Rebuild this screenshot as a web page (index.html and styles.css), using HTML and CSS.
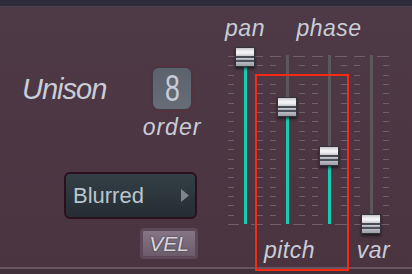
FILE: index.html
```html
<!DOCTYPE html>
<html>
<head>
    <title>Unison</title>
    <link rel="stylesheet" href="styles.css">
</head>
<body>
<div class="topbar"></div>

<div class="panel">
    <div class="left">
        <div class="unison-row">
            <div class="unison">Unison</div>
            <div class="order">
                <div class="order-box"><span class="digit">8</span></div>
                <div class="order-label">order</div>
            </div>
        </div>
        <div class="dropdown">
            <span class="dropdown-text">Blurred</span>
            <svg class="dropdown-arrow" width="8" height="13" viewBox="0 0 8 13">
                <polygon points="0,0 8,6.5 0,13" fill="#7c868c"/>
            </svg>
        </div>
        <div class="vel">VEL</div>
    </div>

    <div class="sliders">
        <div class="slider">
            <div class="label-top"><span>pan</span></div>
            <div class="rail" style="--v: 2px">
                <div class="track"></div>
                <div class="knob"></div>
            </div>
            <div class="label-bottom"></div>
        </div>
        <div class="slider">
            <div class="label-top"></div>
            <div class="rail" style="--v: 52px">
                <div class="track"></div>
                <div class="knob"></div>
            </div>
            <div class="label-bottom"><span>pitch</span></div>
        </div>
        <div class="slider">
            <div class="label-top"><span>phase</span></div>
            <div class="rail" style="--v: 101px">
                <div class="track"></div>
                <div class="knob"></div>
            </div>
            <div class="label-bottom"></div>
        </div>
        <div class="slider">
            <div class="label-top"></div>
            <div class="rail" style="--v: 169px">
                <div class="track"></div>
                <div class="knob"></div>
            </div>
            <div class="label-bottom"><span>var</span></div>
        </div>
    </div>
</div>

<div class="footer"></div>

<div class="highlight"></div>
</body>
</html>
```

FILE: styles.css
```css
* {
    margin: 0;
    padding: 0;
    box-sizing: border-box;
}

body {
    position: relative;
    width: 412px;
    height: 274px;
    overflow: hidden;
    font-family: 'Liberation Sans', Arial, sans-serif;
    background: #4b3541;
    color: #c9cdd8;
}

.topbar {
    height: 7px;
    background: #2d2c3a;
    border-bottom: 1px solid #4a4254;
}

.panel {
    display: flex;
    height: 260px;
    background: linear-gradient(to bottom, #4e3946, #4a3440);
}

.footer {
    height: 7px;
    background: #42303b;
    border-top: 2px solid #6a5462;
}

/* left side */

.left {
    width: 224px;
    display: flex;
    flex-direction: column;
}

.unison-row {
    display: grid;
    grid-template-columns: 130px 40px;
    margin-top: 60px;
    padding-left: 22px;
    height: 72px;
}

.unison {
    font-style: italic;
    font-size: 29px;
    line-height: 34px;
    letter-spacing: -1px;
    margin-top: 5px;
}

.order {
    display: flex;
    flex-direction: column;
    align-items: center;
}

.order-box {
    width: 40px;
    height: 43px;
    border: 1px solid #3a3c48;
    border-radius: 7px;
    background: linear-gradient(to bottom, #5b626c, #666d77);
    box-shadow: 0 0 0 2px #56323f;
    display: flex;
    justify-content: center;
    align-items: center;
}

.digit {
    display: inline-block;
    font-size: 37px;
    line-height: 37px;
    color: #c8ccd6;
    transform: scaleX(0.72);
}

.order-label {
    margin-top: 5px;
    font-style: italic;
    font-size: 23px;
    line-height: 24px;
    letter-spacing: 1px;
    white-space: nowrap;
}

.dropdown {
    margin-top: 33px;
    margin-left: 64px;
    width: 133px;
    height: 47px;
    border: 2px solid #2c0f1c;
    border-radius: 6px;
    background: linear-gradient(to bottom, #343f46, #252d33);
    display: flex;
    align-items: center;
    justify-content: space-between;
    padding: 0 6px 0 7px;
}

.dropdown-text {
    font-size: 22px;
    color: #b9c6cf;
}

.vel {
    margin-top: 9px;
    margin-left: 140px;
    width: 58px;
    height: 31px;
    border: 3px solid #5d4957;
    border-radius: 4px;
    background: linear-gradient(to bottom, #857585, #6c5c6b);
    color: #d6d6de;
    font-style: italic;
    font-size: 21px;
    line-height: 25px;
    text-align: center;
    text-shadow: 0 0 2px #3a2a36;
}

/* sliders */

.sliders {
    display: flex;
}

.slider {
    width: 42px;
    display: flex;
    flex-direction: column;
}

.label-top,
.label-bottom {
    display: flex;
    justify-content: center;
    font-style: italic;
    font-size: 23px;
    line-height: 24px;
    letter-spacing: 0.5px;
    white-space: nowrap;
}

.label-top {
    height: 48px;
    padding-top: 9px;
}

.label-bottom {
    padding-top: 13px;
    padding-left: 5px;
}

.rail {
    position: relative;
    height: 170px;
    background:
        linear-gradient(to bottom, #6f5f69 0 1px, transparent 1px 168px, #6f5f69 168px 169px) 4px 1px / 11px 169px no-repeat,
        linear-gradient(to bottom, #6f5f69 0 1px, transparent 1px 168px, #6f5f69 168px 169px) 27px 1px / 12px 169px no-repeat,
        repeating-linear-gradient(to bottom, #6f5f69 0 1px, transparent 1px 9.333px) 4px 1px / 6px 169px no-repeat,
        repeating-linear-gradient(to bottom, #6f5f69 0 1px, transparent 1px 9.333px) 33px 1px / 6px 169px no-repeat;
}

.track {
    width: 3px;
    height: 169px;
    margin-left: 20px;
    background: linear-gradient(to bottom, #5b5859 var(--v), #16cdb3 var(--v));
}

.knob {
    position: absolute;
    left: 11px;
    top: calc(var(--v) - 10px);
    width: 20px;
    height: 20px;
    border: 1px solid #34343c;
    border-radius: 1px;
    background: linear-gradient(to bottom,
        #c4c4ca 0, #eeeef0 3px, #f4f4f6 5px, #c6c6cc 8px,
        #464a52 8px, #464a52 10px,
        #d2d2d6 10px, #a6a6ae 12px,
        #4c505a 12px, #4c505a 14px,
        #bcbcc4 14px, #9c9ca4 18px);
    box-shadow: 0 2px 3px rgba(0, 0, 0, 0.55);
}

/* red selection box */

.highlight {
    position: absolute;
    left: 255px;
    top: 74px;
    width: 94px;
    height: 197px;
    border: 2px solid #f42a14;
}
```
